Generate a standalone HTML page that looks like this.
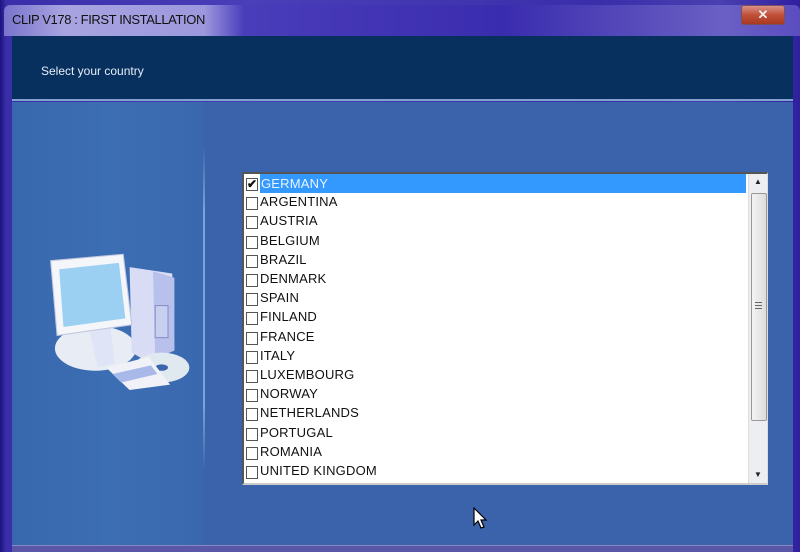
<!DOCTYPE html>
<html><head><style>
*{margin:0;padding:0;box-sizing:border-box}
body{width:800px;height:552px;overflow:hidden;background:#2a1f9a;font-family:"Liberation Sans",sans-serif;position:relative}
#frame{position:absolute;left:0;top:0;width:800px;height:552px;background:linear-gradient(90deg,#1c127e 0,#3a2eaa 6px,#4a3fb8 250px,#3a2eaa 600px,#4a40b0 720px,#3020a0 800px)}
#tb{position:absolute;left:4px;top:5px;width:796px;height:31px;background:linear-gradient(90deg,#7a74cc 0,#a8a4e0 60px,#9d98de 200px,#4a3dba 240px,#3a2cae 500px,#6a60c4 720px,#5a4cc0 800px);border-radius:6px 6px 0 0}
#title{position:absolute;left:12px;top:12px;font-size:13px;color:#111;letter-spacing:-0.4px}
#close{position:absolute;left:741px;top:5px;width:44px;height:20px;border-radius:3px;border:1px solid #7a5060;background:linear-gradient(#d89088,#c05038 50%,#a83820);color:#eee;font-weight:bold;font-size:13px;text-align:center;line-height:18px}
#hdr{position:absolute;left:12px;top:36px;width:781px;height:65px;background:#07305f;border-bottom:2px solid #7fa2ce}
#hdr span{position:absolute;left:29px;top:28px;font-size:12px;color:#e8eef8}
#main{position:absolute;left:12px;top:102px;width:781px;height:443px;background:#3a63ab}
#left{position:absolute;left:0;top:0;width:192px;height:443px;background:linear-gradient(90deg,#3867ad,#3c6eb4 50%,#3a68ae)}
#div{position:absolute;left:191px;top:46px;width:2px;height:320px;background:linear-gradient(#3a6aaf,#7ea4d6 20%,#7ea4d6 80%,#3a6aaf)}
#bot{position:absolute;left:12px;top:545px;width:781px;height:7px;background:#5a56a8;border-top:1px solid #8a88c0}
#list{position:absolute;left:242px;top:172px;width:526px;height:313px;background:#fff;border-top:2px solid #555;border-left:2px solid #555;border-bottom:2px solid #ccc;border-right:1px solid #ddd}
.row{position:absolute;left:0;height:19px;width:504px;font-size:13px;color:#111;line-height:19px}
.row .cb{position:absolute;left:2px;top:4px;width:12px;height:13px;border:1px solid #555;background:#fff}
.row .t{position:absolute;left:16px;top:-1px;letter-spacing:0.2px}
.sel .t{background:#3399ff;color:#e8f4ff;width:486px;padding-left:1px;top:0}
#sb{position:absolute;right:0;top:0;width:19px;height:309px;background:#eceef2;border-left:1px solid #ddd}
#thumb{position:absolute;left:2px;top:19px;width:16px;height:228px;border:1px solid #999;border-radius:2px;background:linear-gradient(90deg,#f4f4f4,#dcdcdc)}
</style></head><body>
<div id="frame"></div>
<div id="tb"></div>
<div id="title">CLIP V178 : FIRST INSTALLATION</div>
<div id="close">✕</div>
<div id="hdr"><span>Select your country</span></div>
<div id="main"><div id="left"></div><div id="div"></div>
<svg style="position:absolute;left:28px;top:148px" width="160" height="140" viewBox="0 0 150 131" preserveAspectRatio="none">
<ellipse cx="52" cy="92" rx="38" ry="21" fill="#e8ecf4"/>
<polygon points="84,16 124,22 126,94 100,104 86,96" fill="#d8dcf4"/>
<polygon points="106,20 126,26 126,94 108,102" fill="#b8c0ec"/>
<rect x="108" y="52" width="12" height="30" fill="#c8d0f0" stroke="#8890c8"/>
<polygon points="46,74 66,72 70,106 54,110" fill="#dfe4f6"/>
<polygon points="10,10 78,4 86,70 16,80" fill="#f4f6fa" stroke="#c0c8e0"/>
<polygon points="18,18 74,12 80,64 22,72" fill="#9cd0f2"/>
<ellipse cx="114" cy="110" rx="26" ry="14" fill="#e0e8f0"/>
<ellipse cx="114" cy="110" rx="6" ry="3" fill="#3a65ad"/>
<polygon points="62,110 102,100 122,126 84,131" fill="#f0f2f8"/>
<polygon points="68,116 104,108 110,116 76,124" fill="#a8b8e8"/>
</svg>
</div>
<div id="bot"></div>
<div id="list">
<div class="row sel" style="top:0"><div class="cb" style="font-size:12px;line-height:11px;text-align:center;font-weight:bold">✔</div><div class="t">GERMANY</div></div>
<div class="row" style="top:19.2px"><div class="cb"></div><div class="t">ARGENTINA</div></div>
<div class="row" style="top:38.4px"><div class="cb"></div><div class="t">AUSTRIA</div></div>
<div class="row" style="top:57.6px"><div class="cb"></div><div class="t">BELGIUM</div></div>
<div class="row" style="top:76.8px"><div class="cb"></div><div class="t">BRAZIL</div></div>
<div class="row" style="top:96px"><div class="cb"></div><div class="t">DENMARK</div></div>
<div class="row" style="top:115.2px"><div class="cb"></div><div class="t">SPAIN</div></div>
<div class="row" style="top:134.4px"><div class="cb"></div><div class="t">FINLAND</div></div>
<div class="row" style="top:153.6px"><div class="cb"></div><div class="t">FRANCE</div></div>
<div class="row" style="top:172.8px"><div class="cb"></div><div class="t">ITALY</div></div>
<div class="row" style="top:192px"><div class="cb"></div><div class="t">LUXEMBOURG</div></div>
<div class="row" style="top:211.2px"><div class="cb"></div><div class="t">NORWAY</div></div>
<div class="row" style="top:230.4px"><div class="cb"></div><div class="t">NETHERLANDS</div></div>
<div class="row" style="top:249.6px"><div class="cb"></div><div class="t">PORTUGAL</div></div>
<div class="row" style="top:268.8px"><div class="cb"></div><div class="t">ROMANIA</div></div>
<div class="row" style="top:288px"><div class="cb"></div><div class="t">UNITED KINGDOM</div></div>
<div id="sb"><div style="position:absolute;left:5px;top:3px;font-size:8px;color:#222">▲</div><div id="thumb"><div style="position:absolute;left:3px;top:108px;width:7px;height:7px;border-top:1px solid #666;border-bottom:1px solid #666"><div style="margin-top:2px;border-top:1px solid #666"></div></div></div><div style="position:absolute;left:5px;top:296px;font-size:8px;color:#222">▼</div></div>
</div>
<svg style="position:absolute;left:473px;top:507px" width="16" height="24" viewBox="0 0 16 24"><path d="M1 1 L1 18 L5 14 L8 21 L11 20 L8 13 L13 13 Z" fill="#fff" stroke="#000" stroke-width="1.2"/></svg>
</body></html>
